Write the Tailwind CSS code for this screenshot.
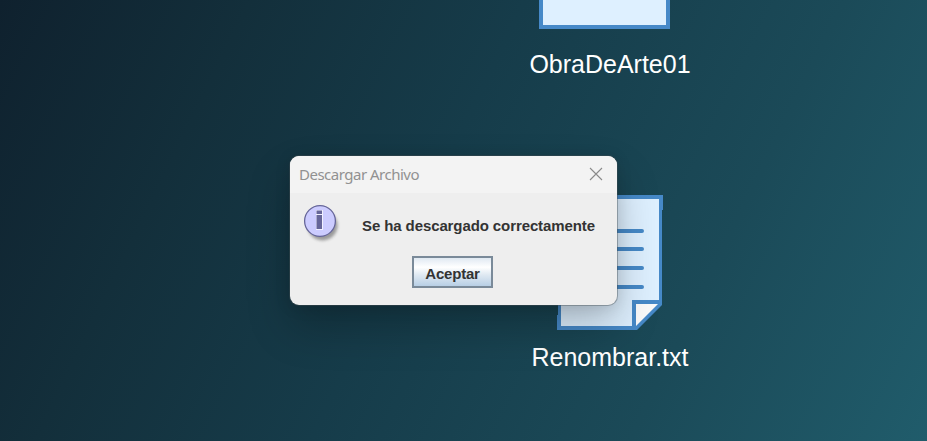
<!DOCTYPE html>
<html lang="es">
<head>
<meta charset="utf-8">
<title>Descargar Archivo</title>
<script src="https://cdn.jsdelivr.net/npm/@tailwindcss/browser@4"></script>
</head>
<body class="overflow-hidden">
<main class="relative h-[441px] w-[927px] overflow-hidden bg-[linear-gradient(116deg,#0f212e_0%,#132f3b_22%,#163c4a_46%,#1b4a58_74%,#205c6b_100%)] font-['Liberation_Sans',Arial,sans-serif]">
  <!-- Desktop files -->
  <div class="ml-[510px] flex w-[200px] flex-col items-center text-[25px] leading-[30px] text-white">
    <div class="mr-[11px] h-[29px] w-[131px] border-4 border-t-0 border-[#4689c8] bg-[#def0ff]"></div>
    <div class="mt-[20px]">ObraDeArte01</div>
    <svg class="mt-[116px] h-[135px] w-[106px]" viewBox="0 0 106 135">
      <path d="M0 0H106V15H105V110L80 135H0V120H1V15H0Z" fill="#4689c8"/>
      <path d="M4 4H102V105H75V131H4Z" fill="#def0ff"/>
      <path d="M79 109H101L79 131Z" fill="#fafafa"/>
      <path d="M21 36H85M21 54H85M21 73H85M21 92H85" stroke="#4689c8" stroke-width="4" stroke-linecap="round"/>
    </svg>
    <div class="mt-[12px]">Renombrar.txt</div>
  </div>

  <!-- Message dialog -->
  <section class="absolute left-[290px] top-[156px] flex h-[149px] w-[327px] flex-col overflow-hidden rounded-[9px] bg-[#eeeeee] shadow-[0_0_0_1px_rgba(70,80,85,0.4),0_22px_44px_rgba(0,0,0,0.24),0_2px_16px_rgba(0,0,0,0.12)]">
    <header class="flex h-[37px] shrink-0 items-center justify-between bg-[#f3f3f3] pl-[9px] pr-[14px]">
      <h1 class="font-['Noto_Sans',sans-serif] text-[15px] tracking-[-0.5px] text-[#919191]">Descargar Archivo</h1>
      <svg class="-mt-[2px] h-[14px] w-[14px]" viewBox="0 0 14 14"><path d="M1 1L13 13M13 1L1 13" stroke="#8b8b8b" stroke-width="1.1"/></svg>
    </header>
    <div class="flex pl-[11px] pt-[9px]">
      <svg class="h-[44px] w-[44px] shrink-0" viewBox="0 0 44 44">
        <defs>
          <filter id="soft" x="-30%" y="-30%" width="160%" height="160%"><feGaussianBlur stdDeviation="1.7"/></filter>
        </defs>
        <circle cx="21.5" cy="23.5" r="15" fill="#777" opacity=".7" filter="url(#soft)"/>
        <circle cx="19" cy="19" r="15.4" fill="#ccccff" stroke="#666699" stroke-width="1.3"/>
        <path d="M15 8h7v5h-7zM15 12h7v16h-7z" fill="#f0f0ff"/>
        <path d="M15.5 8.5h5.5v3.5h-5.5zM15.5 13h5.5v14h-5.5z" fill="#666699"/>
      </svg>
      <p class="ml-[17px] mt-[14px] whitespace-nowrap text-[15px] font-bold leading-[20px] tracking-[-0.1px] text-[#333]">Se ha descargado correctamente</p>
    </div>
    <button class="ml-[122px] mt-[10px] h-[32px] w-[81px] shrink-0 border-2 border-[#7a8a99] bg-[linear-gradient(180deg,#e0e9f2_0%,#ffffff_33%,#dfe9f2_60%,#b8cfe5_100%)] pt-[3px] text-[15px] font-bold leading-[20px] tracking-[-0.2px] text-[#333]">Aceptar</button>
  </section>
</main>
</body>
</html>
